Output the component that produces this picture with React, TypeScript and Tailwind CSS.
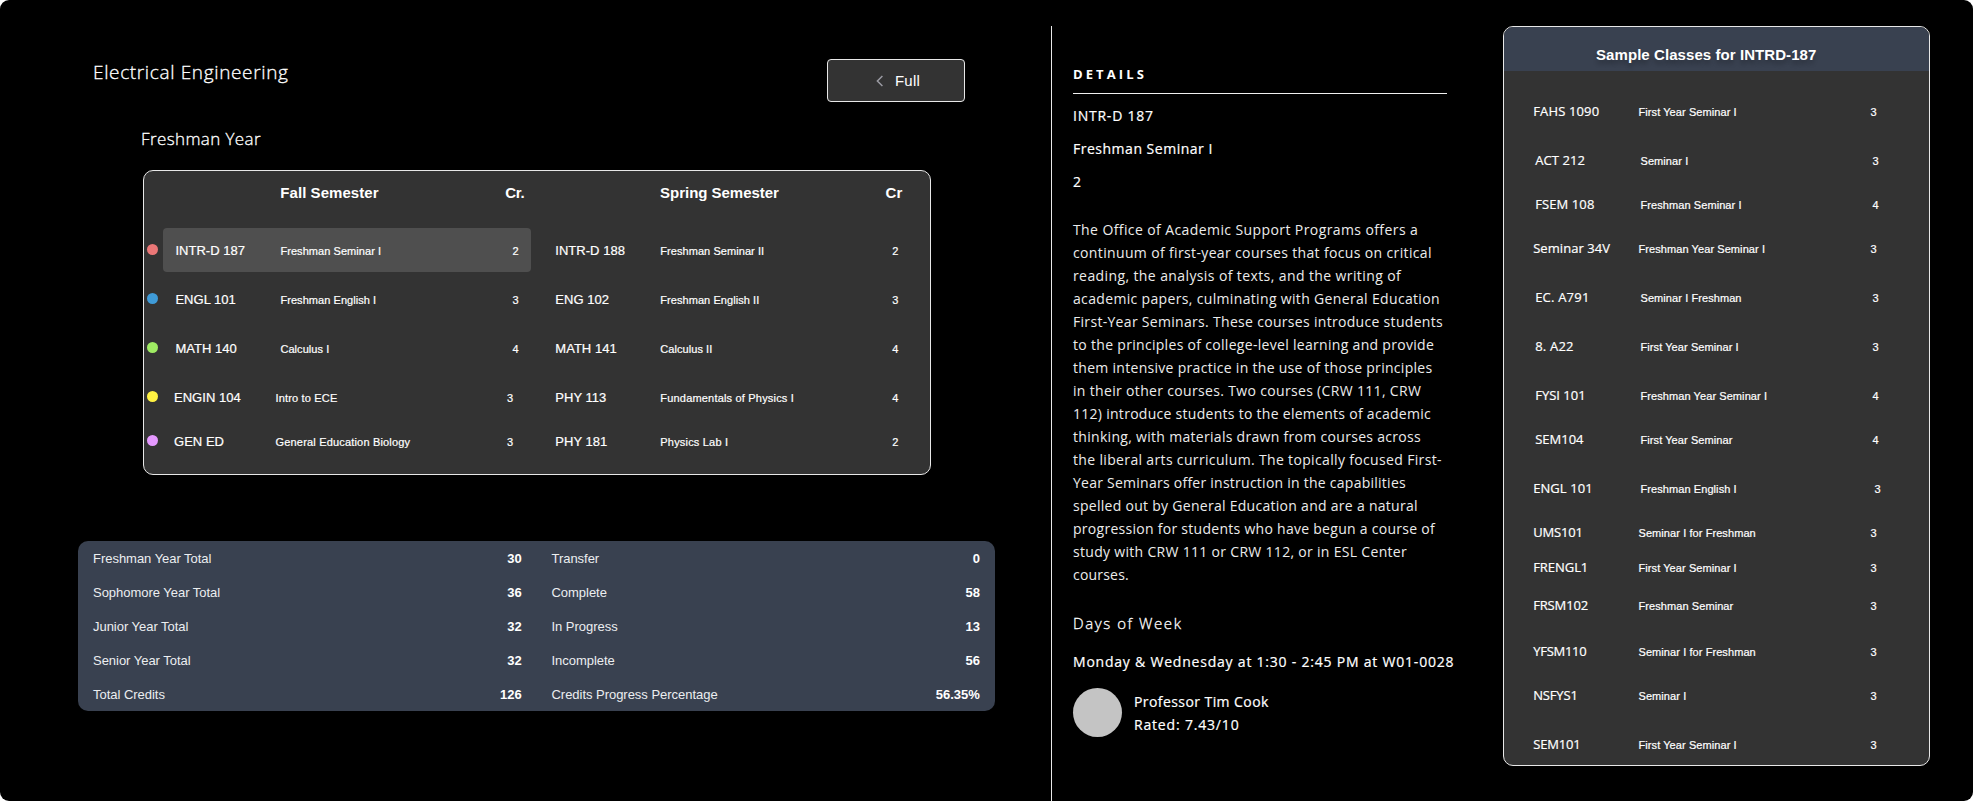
import { clsx } from "clsx";

const SANS = "font-['Liberation_Sans',Arial,sans-serif]";
const HUMANIST = "font-['Open_Sans','Noto_Sans',sans-serif]";
const MEDIUM = "[-webkit-text-stroke:0.2px_currentColor]";
const SOFT = "[-webkit-text-stroke:0.3px_currentColor]";

type Course = { code: string; name: string; credits: string; tracking?: string };
type TermRow = { dot: string; fall: Course; spring: Course; gap?: string; nudged?: boolean; selected?: boolean };

const plan: TermRow[] = [
  {
    dot: "bg-[#eb7777]",
    selected: true,
    fall: { code: "INTR-D 187", name: "Freshman Seminar I", credits: "2" },
    spring: { code: "INTR-D 188", name: "Freshman Seminar II", credits: "2" },
  },
  {
    dot: "bg-[#3f9bd8]",
    gap: "mt-[5px]",
    fall: { code: "ENGL 101", name: "Freshman English I", credits: "3" },
    spring: { code: "ENG 102", name: "Freshman English II", credits: "3" },
  },
  {
    dot: "bg-[#9feb63]",
    gap: "mt-[5px]",
    fall: { code: "MATH 140", name: "Calculus I", credits: "4" },
    spring: { code: "MATH 141", name: "Calculus II", credits: "4" },
  },
  {
    dot: "bg-[#fff242]",
    gap: "mt-[5px]",
    nudged: true,
    fall: { code: "ENGIN 104", name: "Intro to ECE", credits: "3", tracking: "tracking-[0.17px]" },
    spring: { code: "PHY 113", name: "Fundamentals of Physics I", credits: "4", tracking: "tracking-[0.19px]" },
  },
  {
    dot: "bg-[#e599ff]",
    nudged: true,
    fall: { code: "GEN ED", name: "General Education Biology", credits: "3", tracking: "tracking-[0.18px]" },
    spring: { code: "PHY 181", name: "Physics Lab I", credits: "2", tracking: "tracking-[0.19px]" },
  },
];

const yearTotals = [
  ["Freshman Year Total", "30"],
  ["Sophomore Year Total", "36"],
  ["Junior Year Total", "32"],
  ["Senior Year Total", "32"],
  ["Total Credits", "126"],
];

const progressTotals = [
  ["Transfer", "0"],
  ["Complete", "58"],
  ["In Progress", "13"],
  ["Incomplete", "56"],
  ["Credits Progress Percentage", "56.35%"],
];

const description = [
  { text: "The Office of Academic Support Programs offers a", tracking: "tracking-[0.403px]" },
  { text: "continuum of first-year courses that focus on critical", tracking: "tracking-[0.356px]" },
  { text: "reading, the analysis of texts, and the writing of", tracking: "tracking-[0.396px]" },
  { text: "academic papers, culminating with General Education", tracking: "tracking-[0.338px]" },
  { text: "First-Year Seminars. These courses introduce students", tracking: "tracking-[0.307px]" },
  { text: "to the principles of college-level learning and provide", tracking: "tracking-[0.306px]" },
  { text: "them intensive practice in the use of those principles", tracking: "tracking-[0.294px]" },
  { text: "in their other courses. Two courses (CRW 111, CRW", tracking: "tracking-[0.332px]" },
  { text: "112) introduce students to the elements of academic", tracking: "tracking-[0.28px]" },
  { text: "thinking, with materials drawn from courses across", tracking: "tracking-[0.301px]" },
  { text: "the liberal arts curriculum. The topically focused First-", tracking: "tracking-[0.343px]" },
  { text: "Year Seminars offer instruction in the capabilities", tracking: "tracking-[0.25px]" },
  { text: "spelled out by General Education and are a natural", tracking: "tracking-[0.281px]" },
  { text: "progression for students who have begun a course of", tracking: "tracking-[0.278px]" },
  { text: "study with CRW 111 or CRW 112, or in ESL Center", tracking: "tracking-[0.307px]" },
  { text: "courses.", tracking: "tracking-[0.194px]" },
];

const BASE = "pl-[29.2px] grid-cols-[105.3px_232px_auto]";
const INSET = "pl-[31.2px] grid-cols-[105.3px_232px_auto]";
const WIDE = "pl-[29.2px] grid-cols-[107.3px_234px_auto]";

const samples = [
  { code: "FAHS 1090", name: "First Year Seminar I", credits: "3", cols: BASE, gap: "mt-[23px]", tracking: "tracking-[0.15px]" },
  { code: "ACT 212", name: "Seminar I", credits: "3", cols: INSET, gap: "mt-3.5", tracking: "tracking-[0.1px]" },
  { code: "FSEM 108", name: "Freshman Seminar I", credits: "4", cols: INSET, gap: "mt-[9px]", tracking: "tracking-[0.1px]" },
  { code: "Seminar 34V", name: "Freshman Year Seminar I", credits: "3", cols: BASE, gap: "mt-[9px]", tracking: "tracking-[0.05px]" },
  { code: "EC. A791", name: "Seminar I Freshman", credits: "3", cols: INSET, gap: "mt-3.5", tracking: "tracking-[0.2px]" },
  { code: "8. A22", name: "First Year Seminar I", credits: "3", cols: INSET, gap: "mt-3.5", tracking: "tracking-[0.2px]" },
  { code: "FYSI 101", name: "Freshman Year Seminar I", credits: "4", cols: INSET, gap: "mt-3.5", tracking: "tracking-normal" },
  { code: "SEM104", name: "First Year Seminar", credits: "4", cols: INSET, gap: "mt-[9px]", tracking: "tracking-normal" },
  { code: "ENGL 101", name: "Freshman English I", credits: "3", cols: WIDE, gap: "mt-3.5", tracking: "tracking-[0.07px]" },
  { code: "UMS101", name: "Seminar I for Freshman", credits: "3", cols: BASE, gap: "mt-[9px]", tracking: "tracking-[-0.18px]" },
  { code: "FRENGL1", name: "First Year Seminar I", credits: "3", cols: BASE, gap: "mt-0", tracking: "tracking-[-0.05px]" },
  { code: "FRSM102", name: "Freshman Seminar", credits: "3", cols: BASE, gap: "mt-[3px]", tracking: "tracking-[-0.15px]" },
  { code: "YFSM110", name: "Seminar I for Freshman", credits: "3", cols: BASE, gap: "mt-[11px]", tracking: "tracking-[-0.27px]" },
  { code: "NSFYS1", name: "Seminar I", credits: "3", cols: BASE, gap: "mt-[9px]", tracking: "tracking-[-0.15px]" },
  { code: "SEM101", name: "First Year Seminar I", credits: "3", cols: BASE, gap: "mt-3.5", tracking: "tracking-[-0.18px]" },
];

function CourseCells({ course }: { course: Course }) {
  return (
    <>
      <span className={clsx("text-[13px] tracking-[0.03px]", MEDIUM)}>{course.code}</span>
      <span className={clsx("text-[11px]", course.tracking ?? "tracking-[0.06px]", MEDIUM)}>{course.name}</span>
      <span className={clsx("text-[11px]", MEDIUM)}>{course.credits}</span>
    </>
  );
}

function PlanRow({ row }: { row: TermRow }) {
  return (
    <div className={clsx("flex h-11 items-center pl-[3px]", row.gap)}>
      <span className={clsx("mb-px size-[11px] rounded-full", row.dot)} />
      <div
        className={clsx(
          "ml-[5px] grid h-11 w-[368px] items-baseline rounded pt-[13px] leading-5",
          row.nudged ? "grid-cols-[101.5px_231.5px_auto] pl-[11px]" : "grid-cols-[105px_232px_auto] pl-[12.4px]",
          row.selected && "bg-[#4f4f4f]",
        )}
      >
        <CourseCells course={row.fall} />
      </div>
      <div className="grid h-11 flex-1 grid-cols-[105px_232px_auto] items-baseline pt-[13px] pl-[24.3px] leading-5">
        <CourseCells course={row.spring} />
      </div>
    </div>
  );
}

function Totals({ rows }: { rows: string[][] }) {
  return (
    <dl className="flex flex-col">
      {rows.map(([label, value]) => (
        <div key={label} className="flex h-[34px] justify-between pt-2 text-[13px] leading-5">
          <dt className="tracking-[-0.03px] text-[#eceef0]">{label}</dt>
          <dd className="font-bold tracking-[0.04px]">{value}</dd>
        </div>
      ))}
    </dl>
  );
}

function PlanSection() {
  return (
    <section className="w-[1051px] pt-[59px]">
      <div className="flex h-[43px] items-start justify-between pr-[86px] pl-[93px]">
        <h1 className={clsx("-mt-px text-[19px] leading-7 font-light tracking-[0.643px]", HUMANIST, SOFT)}>Electrical Engineering</h1>
        <button className="flex h-[43px] w-[138px] items-center rounded border border-[#e8e8e8] bg-[#333333] pl-[48px] text-[15px]">
          <svg className="h-3 w-2" viewBox="0 0 8 12" fill="none" stroke="#9b9ba3" strokeWidth="1.5">
            <path d="M6.4 1 1.4 6l5 5" />
          </svg>
          <span className="mt-0.5 ml-[11px] tracking-[0.2px]">Full</span>
        </button>
      </div>

      <h2 className={clsx("mt-[25px] pl-[141px] text-[17px] leading-6 font-light tracking-[0.396px]", HUMANIST, SOFT)}>Freshman Year</h2>

      <div className="mt-[19px] ml-[143px] h-[305px] w-[788px] rounded-[10px] border border-[#e8e8e8] bg-[#333333]">
        <div className="grid h-[57px] grid-cols-[225px_154.8px_225.5px_auto] pt-3 pl-[136.3px] text-[15px] leading-5 font-bold">
          <span className="tracking-[0.06px]">Fall Semester</span>
          <span className="tracking-[-0.3px]">Cr.</span>
          <span className="tracking-[-0.03px]">Spring Semester</span>
          <span>Cr</span>
        </div>
        {plan.map((row) => (
          <PlanRow key={row.fall.code} row={row} />
        ))}
      </div>

      <div className="mt-[66px] ml-[78px] grid h-[170px] w-[917px] grid-cols-[428.7px_428.5px] gap-x-[29.8px] rounded-[10px] bg-[#394150] pl-[15px]">
        <Totals rows={yearTotals} />
        <Totals rows={progressTotals} />
      </div>
    </section>
  );
}

function DetailsSection() {
  return (
    <section className={clsx("mt-[26px] w-[452px] border-l border-[#e8e8e8] pt-[38px] pl-[21px] text-sm leading-5 whitespace-nowrap", HUMANIST)}>
      <h2 className="text-[13px] font-bold tracking-[3.1px]">DETAILS</h2>
      <hr className="mt-[9px] w-[374px] border-t border-[#f0f0f0]" />
      <div className={clsx("font-medium", MEDIUM)}>
        <p className="mt-3 tracking-[0.765px]">INTR-D 187</p>
        <p className="mt-[13px] tracking-[0.51px]">Freshman Seminar I</p>
        <p className="mt-[13px]">2</p>
      </div>
      <p className="mt-[26px] flex flex-col leading-[23px] text-[#ececec]">
        {description.map((line) => (
          <span key={line.text} className={line.tracking}>
            {line.text}
          </span>
        ))}
      </p>
      <h3 className={clsx("mt-[27px] text-[15px] font-light tracking-[1.57px]", SOFT)}>Days of Week</h3>
      <p className={clsx("mt-[19px] font-medium tracking-[0.785px]", MEDIUM)}>Monday &amp; Wednesday at 1:30 - 2:45 PM at W01-0028</p>
      <div className="mt-4 flex items-start">
        <span className="size-[49px] rounded-full bg-[#c4c4c4]" />
        <div className={clsx("mt-0.5 ml-3 flex flex-col leading-[23px] font-medium", MEDIUM)}>
          <span className="tracking-[0.426px]">Professor Tim Cook</span>
          <span className="tracking-[0.82px]">Rated: 7.43/10</span>
        </div>
      </div>
    </section>
  );
}

function SampleClasses() {
  return (
    <section className="mt-[26px] h-[740px] w-[427px] overflow-hidden rounded-[10px] border border-[#e8e8e8] bg-[#333333]">
      <h2 className="h-11 bg-[#394150] pt-[18px] pl-[92px] text-[15px] leading-5 font-bold tracking-[0.071px] [text-shadow:0_4px_4px_rgba(0,0,0,0.25)]">
        Sample Classes for INTRD-187
      </h2>
      {samples.map((item) => (
        <div key={item.code} className={clsx("grid h-[35px] items-baseline pt-[7px] leading-5", item.cols, item.gap)}>
          <span className={clsx("text-[13px] font-medium", HUMANIST, MEDIUM, item.tracking)}>{item.code}</span>
          <span className={clsx("text-[11px] tracking-[0.08px]", MEDIUM)}>{item.name}</span>
          <span className={clsx("text-[11px]", MEDIUM)}>{item.credits}</span>
        </div>
      ))}
    </section>
  );
}

export default function App() {
  return (
    <div className="bg-white">
      <main className={clsx("flex h-[801px] w-[1973px] overflow-hidden rounded-[9px] bg-black text-white", SANS)}>
        <PlanSection />
        <DetailsSection />
        <SampleClasses />
      </main>
    </div>
  );
}
